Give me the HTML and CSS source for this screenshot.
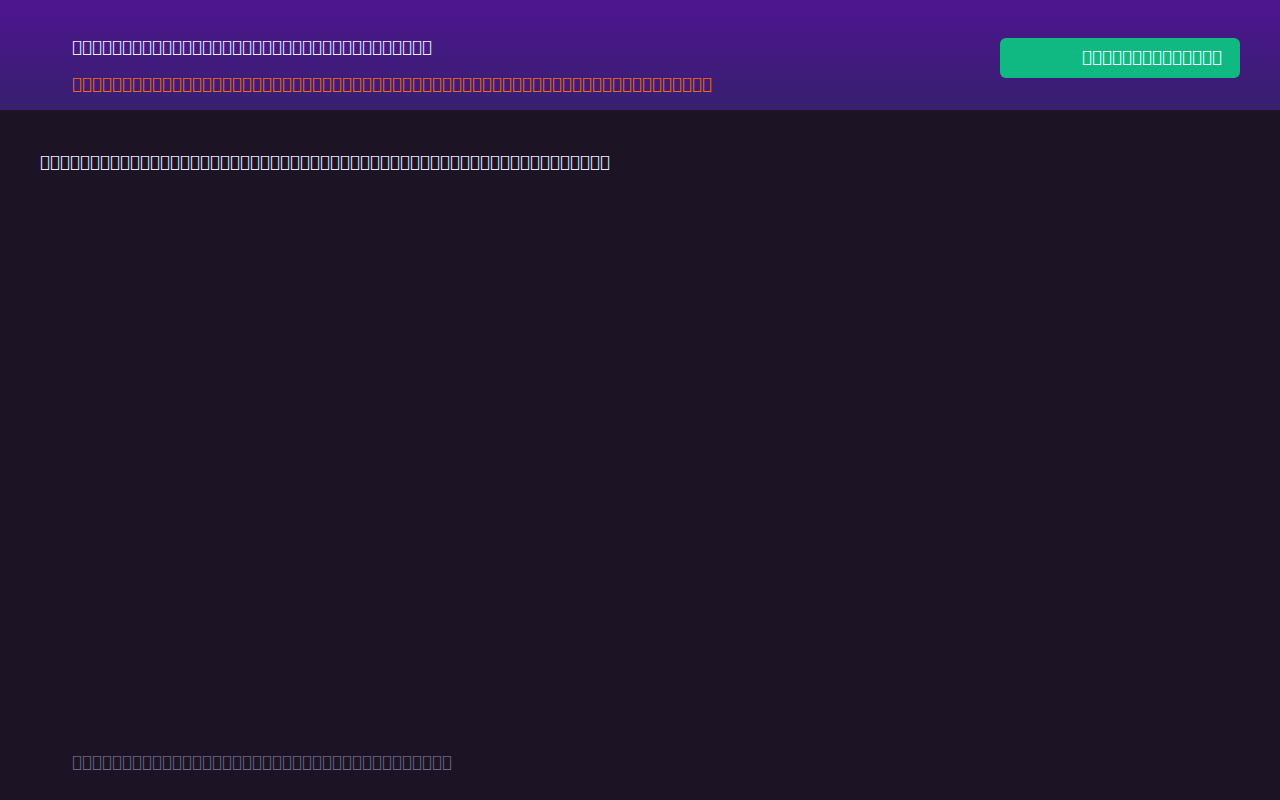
FILE: index.html
```html
<!DOCTYPE html>
<html lang="en">
<head>
    <meta charset="UTF-8">
    <meta name="viewport" content="width=device-width, initial-scale=1.0">
    <title>Dashboard</title>
    <link rel="stylesheet" href="styles.css">
</head>
<body>
    <header class="topbar">
        <div class="topbar-text">
            <p class="title">&#xE000;&#xE000;&#xE000;&#xE000;&#xE000;&#xE000;&#xE000;&#xE000;&#xE000;&#xE000;&#xE000;&#xE000;&#xE000;&#xE000;&#xE000;&#xE000;&#xE000;&#xE000;&#xE000;&#xE000;&#xE000;&#xE000;&#xE000;&#xE000;&#xE000;&#xE000;&#xE000;&#xE000;&#xE000;&#xE000;&#xE000;&#xE000;&#xE000;&#xE000;&#xE000;&#xE000;</p>
            <p class="warning">&#xE000;&#xE000;&#xE000;&#xE000;&#xE000;&#xE000;&#xE000;&#xE000;&#xE000;&#xE000;&#xE000;&#xE000;&#xE000;&#xE000;&#xE000;&#xE000;&#xE000;&#xE000;&#xE000;&#xE000;&#xE000;&#xE000;&#xE000;&#xE000;&#xE000;&#xE000;&#xE000;&#xE000;&#xE000;&#xE000;&#xE000;&#xE000;&#xE000;&#xE000;&#xE000;&#xE000;&#xE000;&#xE000;&#xE000;&#xE000;&#xE000;&#xE000;&#xE000;&#xE000;&#xE000;&#xE000;&#xE000;&#xE000;&#xE000;&#xE000;&#xE000;&#xE000;&#xE000;&#xE000;&#xE000;&#xE000;&#xE000;&#xE000;&#xE000;&#xE000;&#xE000;&#xE000;&#xE000;&#xE000;</p>
        </div>
        <button class="action">&#xE000;&#xE000;&#xE000;&#xE000;&#xE000;&#xE000;&#xE000;&#xE000;&#xE000;&#xE000;&#xE000;&#xE000;&#xE000;&#xE000;</button>
    </header>

    <main class="content">
        <p>&#xE000;&#xE000;&#xE000;&#xE000;&#xE000;&#xE000;&#xE000;&#xE000;&#xE000;&#xE000;&#xE000;&#xE000;&#xE000;&#xE000;&#xE000;&#xE000;&#xE000;&#xE000;&#xE000;&#xE000;&#xE000;&#xE000;&#xE000;&#xE000;&#xE000;&#xE000;&#xE000;&#xE000;&#xE000;&#xE000;&#xE000;&#xE000;&#xE000;&#xE000;&#xE000;&#xE000;&#xE000;&#xE000;&#xE000;&#xE000;&#xE000;&#xE000;&#xE000;&#xE000;&#xE000;&#xE000;&#xE000;&#xE000;&#xE000;&#xE000;&#xE000;&#xE000;&#xE000;&#xE000;&#xE000;&#xE000;&#xE000;</p>
    </main>

    <footer class="footer">
        <p>&#xE000;&#xE000;&#xE000;&#xE000;&#xE000;&#xE000;&#xE000;&#xE000;&#xE000;&#xE000;&#xE000;&#xE000;&#xE000;&#xE000;&#xE000;&#xE000;&#xE000;&#xE000;&#xE000;&#xE000;&#xE000;&#xE000;&#xE000;&#xE000;&#xE000;&#xE000;&#xE000;&#xE000;&#xE000;&#xE000;&#xE000;&#xE000;&#xE000;&#xE000;&#xE000;&#xE000;&#xE000;&#xE000;</p>
    </footer>
</body>
</html>
```

FILE: styles.css
```css
* {
    box-sizing: border-box;
}
html, body {
    height: 100%;
}
body {
    margin: 0;
    font-family: "DejaVu Sans", sans-serif;
    font-size: 16px;
    line-height: 19px;
    letter-spacing: 0.4px;
    background: #1c1424;
    color: #f4f0fa;
    display: flex;
    flex-direction: column;
}
p {
    margin: 0;
}
.topbar {
    height: 110px;
    padding: 37px 40px 0 72px;
    display: flex;
    align-items: flex-start;
    justify-content: space-between;
    background: linear-gradient(to bottom, #4d1591, #37206e);
}
.topbar-text {
    display: flex;
    flex-direction: column;
    gap: 18px;
}
.warning {
    color: #ff6416;
}
.action {
    width: 240px;
    height: 40px;
    margin-top: 1px;
    border: none;
    border-radius: 6px;
    background: #10b981;
    color: #fff;
    font: inherit;
    letter-spacing: inherit;
    text-align: right;
    padding: 0 18px 4px;
}
.content {
    flex: 1;
    padding: 42px 40px;
}
.footer {
    padding: 0 72px 29px;
    color: #6e6680;
}
```
